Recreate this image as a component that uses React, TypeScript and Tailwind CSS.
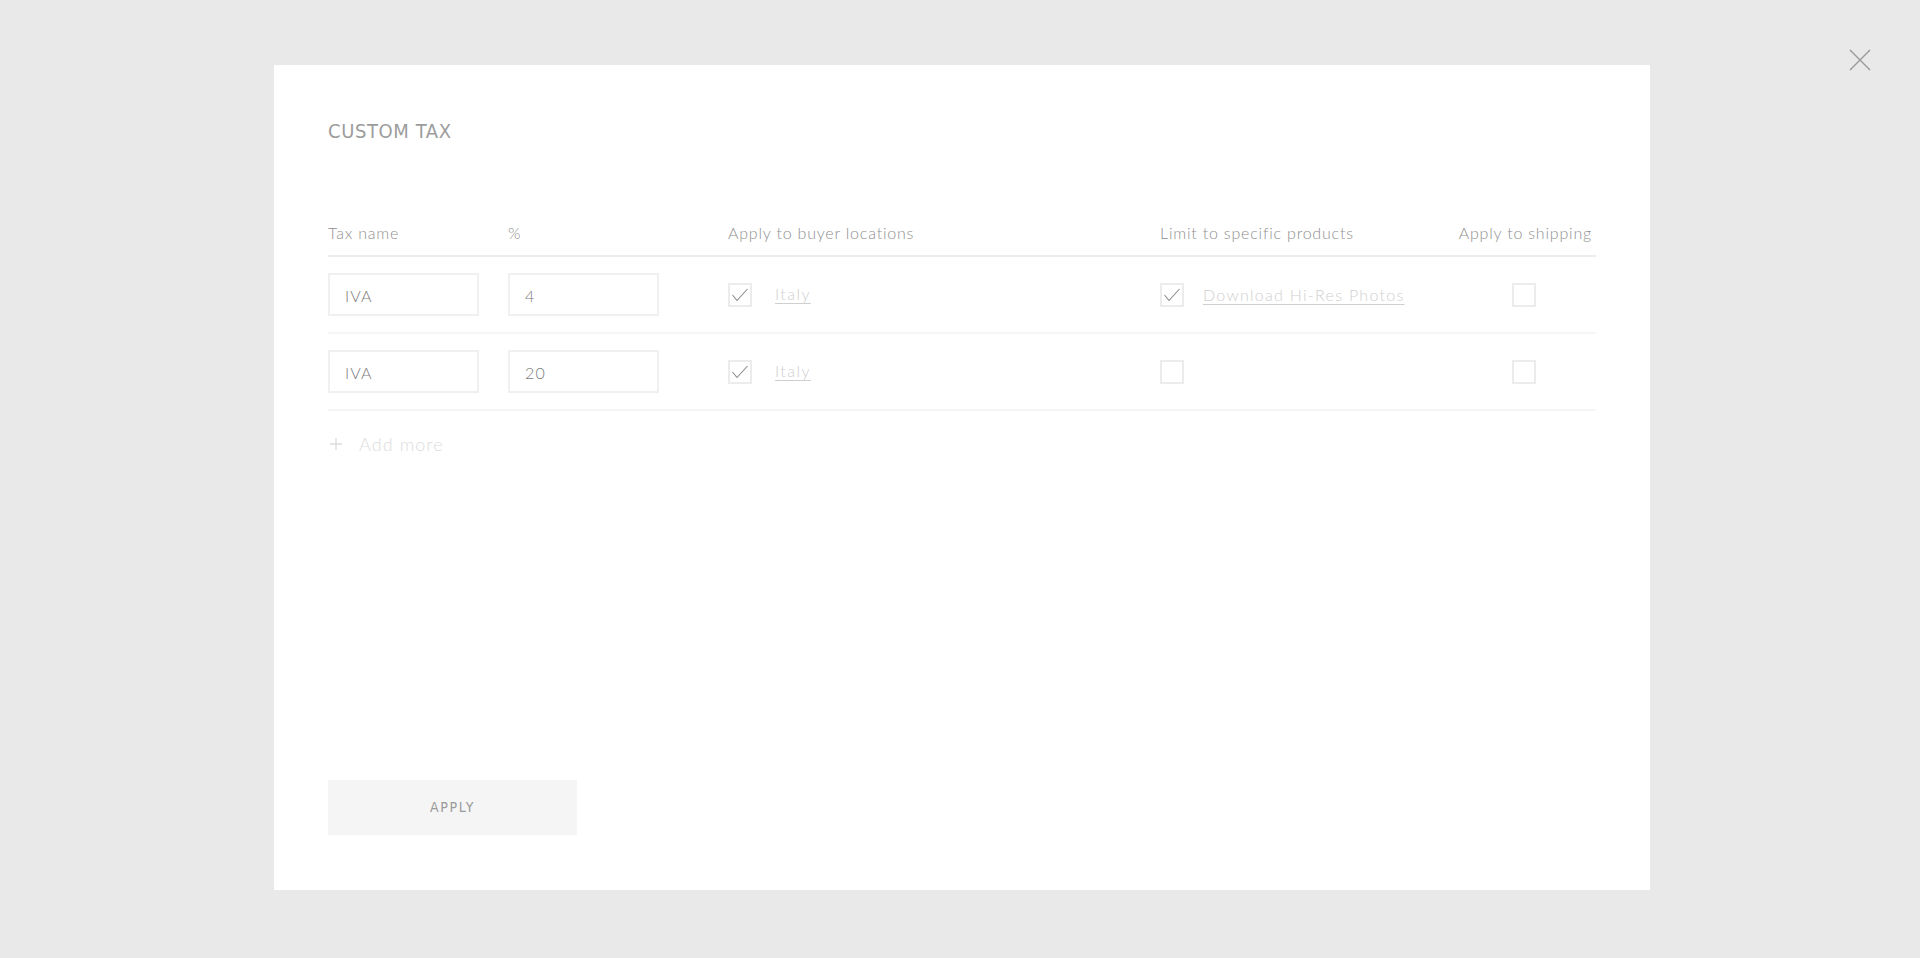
import React from "react";

const font = { fontFamily: "Lato, 'Open Sans', sans-serif" } as React.CSSProperties;
const narrow = { fontFamily: "'Liberation Sans Narrow', 'DejaVu Sans Condensed', sans-serif" } as React.CSSProperties;

function Check({ checked }: { checked: boolean }) {
  return (
    <div className="w-[24px] h-[24px] border-2 border-[#ececec] flex items-center justify-center shrink-0">
      {checked && (
        <svg width="20" height="20" viewBox="0 0 20 20" fill="none">
          <path d="M2.5 10 L7 15.5 L17.5 4" stroke="#8a8a8a" strokeWidth="1.1" />
        </svg>
      )}
    </div>
  );
}

function Input({ value }: { value: string }) {
  return (
    <div className="w-[151px] h-[43px] border-2 border-[#f0f0f0] flex items-center pl-[15px] pt-[2px] text-[16px] font-light text-[#7a7a7a] tracking-[0.07em]">
      {value}
    </div>
  );
}

function Row({ tax, pct, product }: { tax: string; pct: string; product: boolean }) {
  return (
    <div className="grid grid-cols-[180px_220px_432px_1fr_141px] items-center h-[77px] border-b-2 border-[#f6f6f6]">
      <Input value={tax} />
      <Input value={pct} />
      <div className="flex items-center gap-[23px]">
        <Check checked />
        <span className="text-[16px] font-light text-[#cfcfcf] underline underline-offset-[3px] tracking-[0.09em] -mt-[2px]">Italy</span>
      </div>
      <div className="flex items-center gap-[19px]">
        <Check checked={product} />
        {product && (
          <span className="text-[16px] font-light text-[#cfcfcf] underline underline-offset-[3px] tracking-[0.08em]">
            Download Hi-Res Photos
          </span>
        )}
      </div>
      <div className="flex justify-center pr-[3px]">
        <Check checked={false} />
      </div>
    </div>
  );
}

export default function App() {
  return (
    <div className="w-full h-[958px] bg-[#e9e9e9] relative pl-[274px] pt-[65px]" style={font}>
      <button className="absolute left-[1849px] top-[49px] w-[22px] h-[22px]">
        <svg width="22" height="22" viewBox="0 0 22 22" fill="none">
          <path d="M1 1 L21 21 M21 1 L1 21" stroke="#9a9a9a" strokeWidth="1.4" />
        </svg>
      </button>
      <div className="w-[1376px] h-[825px] bg-white px-[54px] pt-[54px] pb-[55px] flex flex-col">
        <h1 className="text-[20px] leading-[24px] text-[#9c9c9c] tracking-[0.03em]" style={narrow}>
          CUSTOM TAX
        </h1>
        <div className="mt-[80px]">
          <div className="grid grid-cols-[180px_220px_432px_1fr_141px] text-[16px] font-light leading-[20px] text-[#8f8f8f] tracking-[0.05em] pb-[12px] border-b-2 border-[#ececec]">
            <div>Tax name</div>
            <div>%</div>
            <div>Apply to buyer locations</div>
            <div>Limit to specific products</div>
            <div className="text-right pr-[4px] whitespace-nowrap">Apply to shipping</div>
          </div>
          <Row tax="IVA" pct="4" product />
          <Row tax="IVA" pct="20" product={false} />
          <div className="flex items-center mt-[23px] h-[20px] text-[#dcdcdc]">
            <svg width="12" height="12" viewBox="0 0 12 12" className="ml-[2px]">
              <path d="M6 0 V12 M0 6 H12" stroke="#dcdcdc" strokeWidth="1.3" />
            </svg>
            <span className="ml-[17px] text-[18px] font-light tracking-[0.06em]">Add more</span>
          </div>
        </div>
        <div className="mt-auto">
          <button className="w-[249px] h-[55px] bg-[#f5f5f5] text-[14px] tracking-[0.12em] text-[#9a9a9a]" style={narrow}>
            APPLY
          </button>
        </div>
      </div>
    </div>
  );
}
